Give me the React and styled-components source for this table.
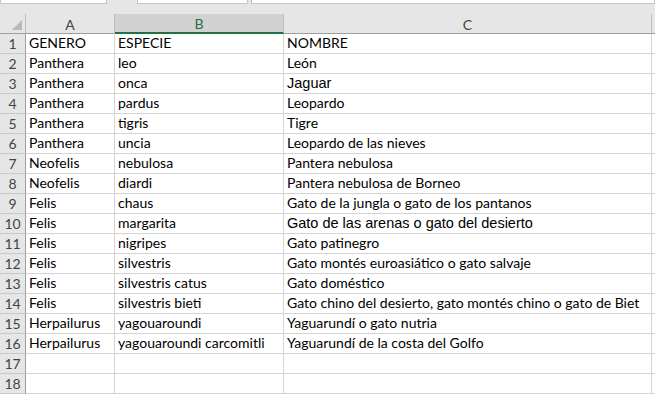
import React from 'react';
import styled, { createGlobalStyle } from 'styled-components';

const rows = [
  ['GENERO', 'ESPECIE', 'NOMBRE'],
  ['Panthera', 'leo', 'León'],
  ['Panthera', 'onca', 'Jaguar', true],
  ['Panthera', 'pardus', 'Leopardo'],
  ['Panthera', 'tigris', 'Tigre'],
  ['Panthera', 'uncia', 'Leopardo de las nieves'],
  ['Neofelis', 'nebulosa', 'Pantera nebulosa'],
  ['Neofelis', 'diardi', 'Pantera nebulosa de Borneo'],
  ['Felis', 'chaus', 'Gato de la jungla o gato de los pantanos'],
  ['Felis', 'margarita', 'Gato de las arenas o gato del desierto', true],
  ['Felis', 'nigripes', 'Gato patinegro'],
  ['Felis', 'silvestris', 'Gato montés euroasiático o gato salvaje'],
  ['Felis', 'silvestris catus', 'Gato doméstico'],
  ['Felis', 'silvestris bieti', 'Gato chino del desierto, gato montés chino o gato de Biet'],
  ['Herpailurus', 'yagouaroundi', 'Yaguarundí o gato nutria'],
  ['Herpailurus', 'yagouaroundi carcomitli', 'Yaguarundí de la costa del Golfo'],
  ['', '', ''],
  ['', '', ''],
];

const GlobalStyle = createGlobalStyle`
  html, body {
    margin: 0;
    padding: 0;
    background: #fff;
    overflow: hidden;
  }
  body {
    font-family: Lato, "Liberation Sans", sans-serif;
  }
`;

const Sheet = styled.div`
  width: 655px;
  height: 394px;
  overflow: hidden;
  background: #fff;
`;

const TopStrip = styled.div`
  height: 14px;
  background: #e6e6e6;
  display: flex;
  align-items: flex-start;
`;

const FieldBox = styled.div`
  height: 4px;
  width: ${p => p.$w}px;
  margin-left: ${p => p.$ml || 0}px;
  flex: ${p => (p.$grow ? 1 : 'none')};
  background: #fff;
  border: 1px solid #c6c6c6;
  border-top: none;
  box-sizing: border-box;
`;

const Grid = styled.div`
  display: grid;
  grid-template-columns: 26px 89px 169px 368px 1fr;
  grid-auto-rows: 20px;
`;

const Corner = styled.div`
  position: relative;
  background: #e6e6e6;
  border-right: 1px solid #bdbdbd;
  border-bottom: 1px solid #9e9e9e;
  box-sizing: border-box;

  &::after {
    content: '';
    position: absolute;
    right: 3px;
    bottom: 3px;
    width: 0;
    height: 0;
    border-left: 10px solid transparent;
    border-bottom: 10px solid #b8b8b8;
  }
`;

const ColHead = styled.div`
  display: flex;
  align-items: center;
  justify-content: center;
  box-sizing: border-box;
  background: ${p => (p.$active ? '#d2d2d2' : '#e6e6e6')};
  color: ${p => (p.$active ? '#217346' : '#444')};
  border-right: 1px solid #bdbdbd;
  border-bottom: ${p => (p.$active ? '2px solid #217346' : '1px solid #9e9e9e')};
  font-family: Lato, "Liberation Sans", sans-serif;
  font-size: 14px;
  padding-top: 1px;
`;

const RowHead = styled.div`
  display: flex;
  align-items: flex-end;
  justify-content: center;
  box-sizing: border-box;
  background: #e6e6e6;
  color: #444;
  border-right: 1px solid #9e9e9e;
  border-bottom: 1px solid #c8c8c8;
  font-size: 14px;
  line-height: 18px;
`;

const Cell = styled.div`
  display: flex;
  align-items: flex-end;
  box-sizing: border-box;
  padding: 0 0 1px 3px;
  border-right: 1px solid #d4d4d4;
  border-bottom: 1px solid #d4d4d4;
  color: #000;
  white-space: nowrap;
  overflow: visible;
  font-family: ${p => (p.$arial ? '"Liberation Sans", Arial, sans-serif' : 'Lato, "Liberation Sans", sans-serif')};
  font-size: ${p => (p.$arial ? '14.5px' : '14px')};
  line-height: 18px;
`;

export default function App() {
  return (
    <Sheet>
      <GlobalStyle />
      <TopStrip>
        <FieldBox $w={107} />
        <FieldBox $w={111} $ml={30} />
        <FieldBox $grow $ml={3} />
      </TopStrip>
      <Grid>
        <Corner />
        <ColHead>A</ColHead>
        <ColHead $active>B</ColHead>
        <ColHead>C</ColHead>
        <ColHead />
        {rows.map((r, i) => (
          <React.Fragment key={i}>
            <RowHead>{i + 1}</RowHead>
            <Cell>{r[0]}</Cell>
            <Cell>{r[1]}</Cell>
            <Cell $arial={r[3]}>{r[2]}</Cell>
            <Cell />
          </React.Fragment>
        ))}
      </Grid>
    </Sheet>
  );
}
